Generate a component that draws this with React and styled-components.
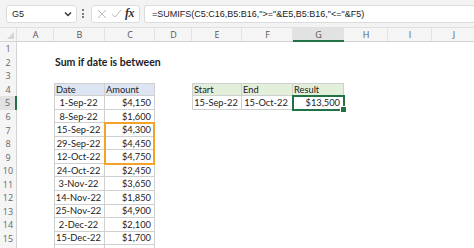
import React from "react";
import styled, { createGlobalStyle, css } from "styled-components";

const GlobalStyle = createGlobalStyle`
	html, body {
		margin: 0;
		padding: 0;
		background: #ffffff;
	}
	body {
		font-family: "Lato", "Liberation Sans", sans-serif;
		color: #222;
	}
`;

const COLS = ["A", "B", "C", "D", "E", "F", "G", "H", "I", "J"];
const WIDTHS = [37, 51, 50, 37, 50, 51, 51, 44, 44, 44];
const ROW_H = 13.55;
const ROWS = 16;

const Page = styled.div`
	width: 474px;
	height: 248px;
	overflow: hidden;
	background: #fff;
`;

const TopBar = styled.div`
	display: flex;
	align-items: center;
	height: 27px;
	padding: 0 0 0 6px;
	background: #f3f3f3;
`;

const Box = styled.div`
	display: flex;
	align-items: center;
	height: 18px;
	box-sizing: border-box;
	background: #fff;
	border: 1px solid #dcdcdc;
	border-radius: 3px;
	font-family: "Liberation Sans", "Open Sans", sans-serif;
	font-size: 9px;
	color: #222;
`;

const NameBox = styled(Box)`
	width: 71px;
	padding: 0 4px 0 5px;
	justify-content: space-between;
`;

const Dots = styled.div`
	display: flex;
	flex-direction: column;
	gap: 1.5px;
	margin: 0 7px 0 5px;
	span {
		width: 2px;
		height: 2px;
		background: #555;
		border-radius: 1px;
	}
`;

const FnBox = styled(Box)`
	width: 49px;
	padding: 0 5px;
	justify-content: space-between;
`;

const Fx = styled.span`
	font-family: "Liberation Serif", serif;
	font-style: italic;
	font-weight: 700;
	font-size: 12px;
	color: #333;
	letter-spacing: -0.5px;
`;

const FormulaBox = styled(Box)`
	flex: 1;
	margin-left: 4px;
	padding-left: 7px;
	border-right: none;
	border-radius: 3px 0 0 3px;
	white-space: nowrap;
`;

const Sheet = styled.div`
	display: grid;
	grid-template-columns: 17px ${WIDTHS.map((w) => w + "px").join(" ")};
	grid-template-rows: 14px repeat(${ROWS}, ${ROW_H}px);
	border-top: 1px solid #e0e0e0;
`;

const placed = css`
	grid-column: ${(p) => p.$col};
	grid-row: ${(p) => p.$row};
`;

const Corner = styled.div`
	${placed}
	background: #f5f5f5;
	border-right: 1px solid #e0e0e0;
	border-bottom: 1px solid #d4d4d4;
	position: relative;
	&::after {
		content: "";
		position: absolute;
		right: 2px;
		bottom: 2px;
		border-left: 7px solid transparent;
		border-bottom: 7px solid #d4d4d4;
	}
`;

const ColHead = styled.div`
	${placed}
	display: flex;
	align-items: center;
	justify-content: center;
	font-family: "Open Sans", "Liberation Sans", sans-serif;
	font-size: 9px;
	color: #555;
	background: ${(p) => (p.$active ? "#e2e2e2" : "#f5f5f5")};
	border-bottom: ${(p) => (p.$active ? "2px solid #217346" : "1px solid #d4d4d4")};
	box-shadow: inset -1px 0 0 #e3e3e3;
	box-sizing: border-box;
`;

const RowHead = styled.div`
	${placed}
	display: flex;
	align-items: center;
	justify-content: center;
	font-family: "Open Sans", "Liberation Sans", sans-serif;
	font-size: 9px;
	color: #666;
	background: ${(p) => (p.$active ? "#e2e2e2" : "#f5f5f5")};
	border-right: ${(p) => (p.$active ? "2px solid #217346" : "1px solid #d4d4d4")};
	box-sizing: border-box;
`;

const fills = {
	blue: "#dde5f3",
	green: "#e3efda",
	plain: "transparent",
};

const Cell = styled.div`
	${placed}
	display: flex;
	align-items: center;
	box-sizing: border-box;
	padding: 0 3px 0 1px;
	font-size: ${(p) => (p.$bold ? "10.5px" : "9.3px")};
	white-space: nowrap;
	overflow: visible;
	background: ${(p) => fills[p.$fill || "plain"]};
	justify-content: ${(p) =>
		p.$align === "right" ? "flex-end" : p.$align === "center" ? "center" : "flex-start"};
	font-weight: ${(p) => (p.$bold ? 700 : 400)};
	${(p) =>
		p.$table &&
		css`
			border-right: 1px solid #cfcfcf;
			border-bottom: 1px solid #cfcfcf;
		`}
	${(p) => p.$edgeTop && "border-top: 1px solid #cfcfcf;"}
	${(p) => p.$edgeLeft && "border-left: 1px solid #cfcfcf;"}
`;

const Highlight = styled.div`
	${placed}
	box-sizing: border-box;
	border: 2px solid #f3a32a;
	margin: -1px 0 -1px -1px;
	pointer-events: none;
`;

const Selection = styled.div`
	${placed}
	box-sizing: border-box;
	border: 2px solid #217346;
	margin: -1px;
	position: relative;
	&::after {
		content: "";
		position: absolute;
		right: -4px;
		bottom: -4px;
		width: 5px;
		height: 5px;
		background: #217346;
		border: 1px solid #fff;
	}
`;

const dates = [
	["1-Sep-22", "$4,150"],
	["8-Sep-22", "$1,600"],
	["15-Sep-22", "$4,300"],
	["29-Sep-22", "$4,450"],
	["12-Oct-22", "$4,750"],
	["24-Oct-22", "$2,450"],
	["3-Nov-22", "$3,650"],
	["14-Nov-22", "$1,850"],
	["25-Nov-22", "$4,900"],
	["2-Dec-22", "$2,100"],
	["15-Dec-22", "$1,700"],
	["", ""],
];

const buildCells = () => {
	const cells = {};
	cells["B2"] = { text: "Sum if date is between", bold: true };
	cells["B4"] = { text: "Date", fill: "blue", table: true, edgeTop: true, edgeLeft: true };
	cells["C4"] = { text: "Amount", fill: "blue", table: true, edgeTop: true };
	dates.forEach(([d, a], i) => {
		const r = 5 + i;
		cells["B" + r] = { text: d, align: "center", table: true, edgeLeft: true };
		cells["C" + r] = { text: a, align: "right", table: true };
	});
	cells["E4"] = { text: "Start", fill: "green", table: true, edgeTop: true, edgeLeft: true };
	cells["F4"] = { text: "End", fill: "green", table: true, edgeTop: true };
	cells["G4"] = { text: "Result", fill: "green", table: true, edgeTop: true };
	cells["E5"] = { text: "15-Sep-22", align: "center", table: true, edgeLeft: true };
	cells["F5"] = { text: "15-Oct-22", align: "center", table: true };
	cells["G5"] = { text: "$13,500", align: "right", table: true };
	return cells;
};

const ChevronDown = () => (
	<svg width="8" height="6" viewBox="0 0 8 6">
		<path d="M1 1.5 L4 4.5 L7 1.5" fill="none" stroke="#333" strokeWidth="1.4" />
	</svg>
);

const Cross = () => (
	<svg width="10" height="10" viewBox="0 0 10 10">
		<path d="M1 1 L9 9 M9 1 L1 9" stroke="#bdbdbd" strokeWidth="1" fill="none" />
	</svg>
);

const Check = () => (
	<svg width="11" height="9" viewBox="0 0 11 9">
		<path d="M1 5 L4 8 L10 1" stroke="#bdbdbd" strokeWidth="1" fill="none" />
	</svg>
);

const App = () => {
	const cells = buildCells();
	const rows = Array.from({ length: ROWS }, (_, i) => i + 1);
	return (
		<Page>
			<GlobalStyle />
			<TopBar>
				<NameBox>
					<span>G5</span>
					<ChevronDown />
				</NameBox>
				<Dots>
					<span />
					<span />
					<span />
				</Dots>
				<FnBox>
					<Cross />
					<Check />
					<Fx>fx</Fx>
				</FnBox>
				<FormulaBox>=SUMIFS(C5:C16,B5:B16,"&gt;="&amp;E5,B5:B16,"&lt;="&amp;F5)</FormulaBox>
			</TopBar>
			<Sheet>
				<Corner $col={1} $row={1} />
				{COLS.map((c, ci) => (
					<ColHead key={c} $col={ci + 2} $row={1} $active={c === "G"}>
						{c}
					</ColHead>
				))}
				{rows.map((r) => (
					<React.Fragment key={r}>
						<RowHead $col={1} $row={r + 1} $active={r === 5}>
							{r}
						</RowHead>
						{COLS.map((c, ci) => {
							const cell = cells[c + r] || {};
							return (
								<Cell
									key={c + r}
									$col={ci + 2}
									$row={r + 1}
									$fill={cell.fill}
									$align={cell.align}
									$bold={cell.bold}
									$table={cell.table}
									$edgeTop={cell.edgeTop}
									$edgeLeft={cell.edgeLeft}
								>
									{cell.text}
								</Cell>
							);
						})}
					</React.Fragment>
				))}
				<Highlight $col={4} $row="8 / 11" />
				<Selection $col={8} $row={6} />
			</Sheet>
		</Page>
	);
};

export default App;
